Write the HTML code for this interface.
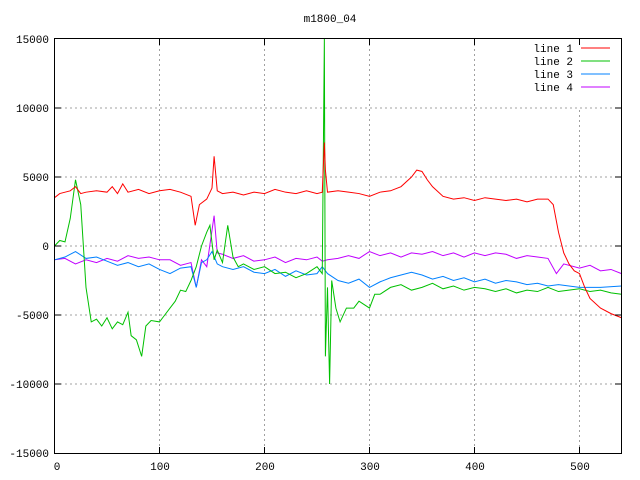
<!DOCTYPE html>
<html><head><style>
html,body{margin:0;padding:0;background:#fff;}
svg{display:block;font-family:"Liberation Mono",monospace;font-size:11px;}
</style></head><body>
<svg width="640" height="480" viewBox="0 0 640 480">
<text x="330" y="22" text-anchor="middle">m1800_04</text>
<g stroke="#a0a0a0" stroke-dasharray="2,3" stroke-width="1">
<line x1="55" x2="621" y1="108" y2="108"/><line x1="55" x2="621" y1="177" y2="177"/>
<line x1="55" x2="621" y1="246" y2="246"/><line x1="55" x2="621" y1="315" y2="315"/>
<line x1="55" x2="621" y1="384" y2="384"/>
<line x1="159.5" x2="159.5" y1="39" y2="453"/><line x1="264.5" x2="264.5" y1="39" y2="453"/>
<line x1="369.5" x2="369.5" y1="39" y2="453"/><line x1="474.5" x2="474.5" y1="39" y2="453"/>
<line x1="579.5" x2="579.5" y1="110" y2="453"/>
</g>
<g font-size="11">
<g text-anchor="end">
<text x="49" y="43">15000</text><text x="49" y="112">10000</text><text x="49" y="181">5000</text>
<text x="49" y="250">0</text><text x="49" y="319">-5000</text><text x="49" y="388">-10000</text><text x="49" y="457">-15000</text>
</g>
<g text-anchor="middle">
<text x="57" y="470">0</text><text x="160" y="470">100</text><text x="265" y="470">200</text>
<text x="370" y="470">300</text><text x="475" y="470">400</text><text x="580" y="470">500</text>
</g>
<g text-anchor="end">
<text x="573" y="52">line 1</text><text x="573" y="65">line 2</text>
<text x="573" y="78">line 3</text><text x="573" y="91">line 4</text>
</g>
</g>
<line x1="581" x2="610" y1="48" y2="48" stroke="#ff0000"/>
<line x1="581" x2="610" y1="61" y2="61" stroke="#00c000"/>
<line x1="581" x2="610" y1="74" y2="74" stroke="#0080ff"/>
<line x1="581" x2="610" y1="87" y2="87" stroke="#c000ff"/>
<g transform="translate(54.5,246) scale(1.05,-0.0138)" fill="none" stroke-width="1">
<polyline vector-effect="non-scaling-stroke" stroke="#c000ff" points="0,-1000 10,-900 20,-1300 30,-1000 40,-1200 50,-900 60,-1100 70,-700 80,-900 90,-800 100,-1000 110,-1000 120,-1400 130,-1200 135,-3000 140,-1000 145,-1500 152,2200 155,-500 160,-600 170,-900 180,-700 190,-1100 200,-1000 210,-800 220,-1200 230,-900 240,-1000 250,-800 255,-1100 260,-1000 270,-900 280,-700 290,-900 300,-400 310,-700 320,-500 330,-800 340,-500 350,-600 360,-400 370,-700 380,-500 390,-800 400,-500 410,-700 420,-500 430,-600 440,-900 450,-700 460,-800 470,-900 478,-2000 485,-1300 500,-1600 510,-1400 520,-1800 530,-1700 540,-2000"/>
<polyline vector-effect="non-scaling-stroke" stroke="#0080ff" points="0,-1000 10,-800 20,-400 30,-900 40,-800 50,-1100 60,-1400 70,-1200 80,-1500 90,-1300 100,-1700 110,-2000 120,-1600 130,-1500 135,-3000 140,-1200 145,-1000 150,-400 155,-1300 160,-1500 170,-1700 180,-1500 190,-1900 200,-2000 210,-1700 220,-2200 230,-1800 240,-2100 250,-2000 255,-1500 260,-2000 270,-2500 280,-2700 290,-2400 300,-3000 310,-2600 320,-2300 330,-2100 340,-1900 350,-2100 360,-2400 370,-2200 380,-2500 390,-2300 400,-2600 410,-2400 420,-2700 430,-2500 440,-2600 450,-2800 460,-2700 470,-2900 480,-2800 490,-2900 500,-3000 520,-3000 540,-2900"/>
<polyline vector-effect="non-scaling-stroke" stroke="#00c000" points="0,0 5,400 10,300 15,2000 20,4800 25,3000 30,-3000 35,-5500 40,-5300 45,-5800 50,-5200 55,-6000 60,-5500 65,-5700 70,-4800 73,-6500 78,-6800 83,-8000 87,-5800 92,-5400 100,-5500 105,-5000 110,-4500 115,-4000 120,-3200 125,-3300 130,-2500 135,-1500 140,0 145,1000 148,1500 152,-1000 155,-300 160,-1200 165,1500 170,-800 175,-1500 180,-1300 190,-1700 200,-1500 210,-2000 220,-1900 230,-2300 240,-2000 250,-1500 255,-2000 257,15000 258,-8000 260,-3000 262,-10000 264,-2500 268,-4500 272,-5500 278,-4500 285,-4500 290,-4000 300,-4500 305,-3500 310,-3500 320,-3000 330,-2800 340,-3200 350,-3000 360,-2700 370,-3100 380,-2900 390,-3200 400,-3000 410,-3100 420,-3300 430,-3100 440,-3400 450,-3200 460,-3300 470,-3000 480,-3300 490,-3200 500,-3100 510,-3300 520,-3200 530,-3400 540,-3500"/>
<polyline vector-effect="non-scaling-stroke" stroke="#ff0000" points="0,3500 5,3800 10,3900 15,4000 20,4300 25,3800 30,3900 40,4000 50,3900 55,4300 60,3800 65,4500 70,3900 80,4100 90,3800 100,4000 110,4100 120,3900 130,3600 134,1500 138,3000 145,3400 150,4200 152,6500 155,4000 160,3800 170,3900 180,3700 190,3900 200,3800 210,4100 220,3900 230,3800 240,4000 250,3800 255,3900 257,7500 258,5500 260,3900 270,4000 280,3900 290,3800 300,3600 310,3900 320,4000 330,4300 340,5000 345,5500 350,5400 355,4800 360,4300 370,3600 380,3400 390,3500 400,3300 410,3500 420,3400 430,3300 440,3400 450,3200 460,3400 470,3400 475,3000 480,1000 485,-500 490,-1300 495,-1800 500,-2000 505,-3000 510,-3800 520,-4500 530,-4900 540,-5200"/>
</g>
<g stroke="#000" stroke-width="1" fill="none">
<rect x="54.5" y="38.5" width="567" height="415"/>
<path d="M55 108h6M55 177h6M55 315h6M55 384h6M621 108h-6M621 177h-6M621 246h-6M621 315h-6M621 384h-6M55 246h6"/>
<path d="M159.5 453v-6M264.5 453v-6M369.5 453v-6M474.5 453v-6M579.5 453v-6M159.5 39v6M264.5 39v6M369.5 39v6M474.5 39v6M579.5 39v6"/>
</g>
</svg>
</body></html>
